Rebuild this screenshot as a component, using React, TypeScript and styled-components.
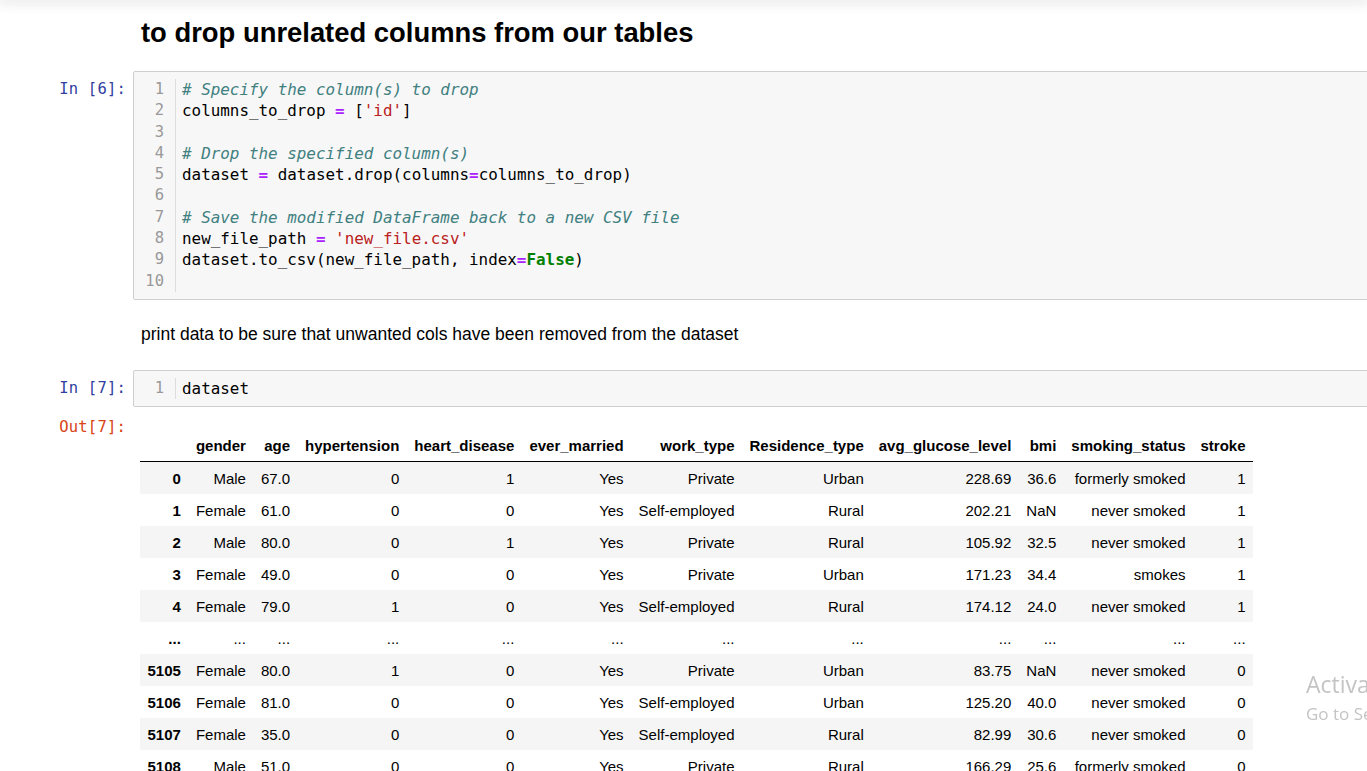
import React from "react";
import styled, { createGlobalStyle } from "styled-components";

const Global = createGlobalStyle`
  html, body { margin: 0; padding: 0; background: #fff; overflow: hidden; }
  body { font-family: "Liberation Sans", Arial, sans-serif; color: #000; }
`;

const TopShadow = styled.div`
  height: 0;
  box-shadow: 0 0 12px 2px rgba(87, 87, 87, 0.28);
`;

const Notebook = styled.div`
  width: 1440px;
  display: flex;
  flex-direction: column;
`;

const Row = styled.div<{ $mt: number }>`
  display: grid;
  grid-template-columns: 133px 1fr;
  margin-top: ${(p) => p.$mt}px;
`;

const Prompt = styled.div<{ $out?: boolean }>`
  font-family: "DejaVu Sans Mono", "Liberation Mono", monospace;
  font-size: 15.5px;
  line-height: 21.3px;
  color: ${(p) => (p.$out ? "#D84315" : "#303F9F")};
  text-align: right;
  padding: 8px 7px 0 0;
  letter-spacing: 0.2px;
`;

const Heading = styled.h2`
  margin: 0;
  padding-left: 8px;
  font-size: 27.4px;
  line-height: 32px;
  font-weight: bold;
`;

const Para = styled.p`
  margin: 0;
  padding-left: 8px;
  font-size: 17.5px;
  line-height: 20px;
`;

const CodeBox = styled.div`
  display: flex;
  background: #f7f7f7;
  border: 1px solid #cfcfcf;
  border-radius: 2px;
  padding: 7px 0;
`;

const Gutter = styled.div`
  width: 41px;
  border-right: 1px solid #ddd;
  display: flex;
  flex-direction: column;
`;

const LineNo = styled.div`
  font-family: "DejaVu Sans Mono", "Liberation Mono", monospace;
  font-size: 15.5px;
  line-height: 21.3px;
  color: #999;
  text-align: right;
  padding-right: 11px;
`;

const CodeLines = styled.div`
  display: flex;
  flex-direction: column;
  padding-left: 6px;
`;

const Line = styled.div`
  font-family: "DejaVu Sans Mono", "Liberation Mono", monospace;
  font-size: 15.9px;
  line-height: 21.3px;
  height: 21.3px;
  white-space: pre;
  color: #000;
`;

const Comment = styled.span`
  color: #408080;
  font-style: italic;
`;
const Op = styled.span`
  color: #aa22ff;
  font-weight: bold;
`;
const Str = styled.span`
  color: #ba2121;
`;
const Kw = styled.span`
  color: #008000;
  font-weight: bold;
`;

const OutArea = styled.div`
  padding: 19px 0 0 7px;
`;

const Table = styled.table`
  border-collapse: collapse;
  border: none;
  font-family: "Liberation Sans", Arial, sans-serif;
  font-size: 15px;
  line-height: 17px;

  thead tr th {
    border-bottom: 1px solid #000;
    padding-top: 8.5px;
  }
  tbody tr:nth-child(odd) {
    background: #f5f5f5;
  }
  th, td {
    padding: 7.5px 7.5px;
    text-align: right;
    white-space: nowrap;
  }
  th {
    font-weight: bold;
  }
  td {
    font-weight: normal;
  }
`;

const Watermark = styled.div`
  position: fixed;
  left: 1306px;
  top: 668px;
  color: #c4c4c4;
  font-family: "Open Sans", "Noto Sans", sans-serif;
  white-space: nowrap;
  pointer-events: none;
`;
const WmBig = styled.div`
  font-size: 23px;
  line-height: 32px;
`;
const WmSmall = styled.div`
  font-size: 17px;
  line-height: 20px;
  margin-top: 4px;
`;

const cols = [
  "gender",
  "age",
  "hypertension",
  "heart_disease",
  "ever_married",
  "work_type",
  "Residence_type",
  "avg_glucose_level",
  "bmi",
  "smoking_status",
  "stroke",
];

const rows: string[][] = [
  ["0", "Male", "67.0", "0", "1", "Yes", "Private", "Urban", "228.69", "36.6", "formerly smoked", "1"],
  ["1", "Female", "61.0", "0", "0", "Yes", "Self-employed", "Rural", "202.21", "NaN", "never smoked", "1"],
  ["2", "Male", "80.0", "0", "1", "Yes", "Private", "Rural", "105.92", "32.5", "never smoked", "1"],
  ["3", "Female", "49.0", "0", "0", "Yes", "Private", "Urban", "171.23", "34.4", "smokes", "1"],
  ["4", "Female", "79.0", "1", "0", "Yes", "Self-employed", "Rural", "174.12", "24.0", "never smoked", "1"],
  ["...", "...", "...", "...", "...", "...", "...", "...", "...", "...", "...", "..."],
  ["5105", "Female", "80.0", "1", "0", "Yes", "Private", "Urban", "83.75", "NaN", "never smoked", "0"],
  ["5106", "Female", "81.0", "0", "0", "Yes", "Self-employed", "Urban", "125.20", "40.0", "never smoked", "0"],
  ["5107", "Female", "35.0", "0", "0", "Yes", "Self-employed", "Rural", "82.99", "30.6", "never smoked", "0"],
  ["5108", "Male", "51.0", "0", "0", "Yes", "Private", "Rural", "166.29", "25.6", "formerly smoked", "0"],
];

const code: React.ReactNode[] = [
  <Comment># Specify the column(s) to drop</Comment>,
  <>columns_to_drop <Op>=</Op> [<Str>'id'</Str>]</>,
  <> </>,
  <Comment># Drop the specified column(s)</Comment>,
  <>dataset <Op>=</Op> dataset.drop(columns<Op>=</Op>columns_to_drop)</>,
  <> </>,
  <Comment># Save the modified DataFrame back to a new CSV file</Comment>,
  <>new_file_path <Op>=</Op> <Str>'new_file.csv'</Str></>,
  <>dataset.to_csv(new_file_path, index<Op>=</Op><Kw>False</Kw>)</>,
  <> </>,
];

export default function App() {
  return (
    <>
      <Global />
      <TopShadow />
      <Notebook>
        <Row $mt={17}>
          <div />
          <Heading>to drop unrelated columns from our tables</Heading>
        </Row>
        <Row $mt={22}>
          <Prompt>In [6]:</Prompt>
          <CodeBox>
            <Gutter>
              {code.map((_, i) => (
                <LineNo key={i}>{i + 1}</LineNo>
              ))}
            </Gutter>
            <CodeLines>
              {code.map((c, i) => (
                <Line key={i}>{c}</Line>
              ))}
            </CodeLines>
          </CodeBox>
        </Row>
        <Row $mt={24}>
          <div />
          <Para>print data to be sure that unwanted cols have been removed from the dataset</Para>
        </Row>
        <Row $mt={26}>
          <Prompt>In [7]:</Prompt>
          <CodeBox>
            <Gutter>
              <LineNo>1</LineNo>
            </Gutter>
            <CodeLines>
              <Line>dataset</Line>
            </CodeLines>
          </CodeBox>
        </Row>
        <Row $mt={2}>
          <Prompt $out>Out[7]:</Prompt>
          <OutArea>
            <Table>
              <thead>
                <tr>
                  <th></th>
                  {cols.map((c) => (
                    <th key={c}>{c}</th>
                  ))}
                </tr>
              </thead>
              <tbody>
                {rows.map((r, i) => (
                  <tr key={i}>
                    <th>{r[0]}</th>
                    {r.slice(1).map((v, j) => (
                      <td key={j}>{v}</td>
                    ))}
                  </tr>
                ))}
              </tbody>
            </Table>
          </OutArea>
        </Row>
      </Notebook>
      <Watermark>
        <WmBig>Activate Windows</WmBig>
        <WmSmall>Go to Settings to activate Windows.</WmSmall>
      </Watermark>
    </>
  );
}
